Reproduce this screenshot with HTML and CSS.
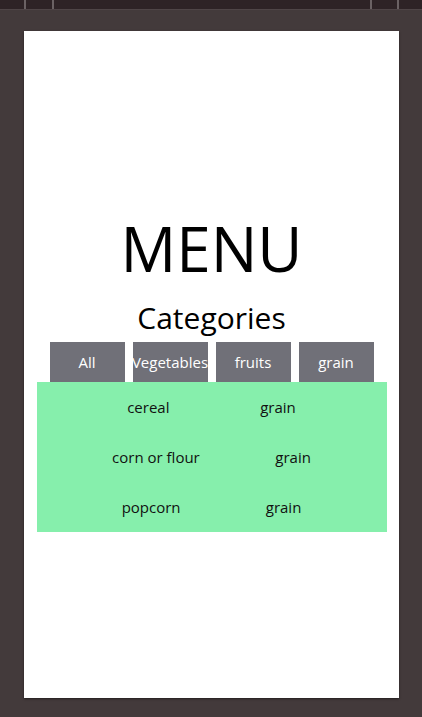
FILE: index.html
```html
<!DOCTYPE html>
<html lang="en">
<head>
<meta charset="utf-8">
<title>Menu</title>
<link rel="stylesheet" href="styles.css">
</head>
<body>
<div class="topbar">
  <span class="tick t1"></span>
  <span class="tick t2"></span>
  <span class="spacer"></span>
  <span class="tick t3"></span>
  <span class="tick t4"></span>
</div>
<div class="stage">
  <main class="device">
    <h1 class="title">MENU</h1>
    <h2 class="subtitle">Categories</h2>
    <div class="filters">
      <div class="btn">All</div>
      <div class="btn">Vegetables</div>
      <div class="btn">fruits</div>
      <div class="btn">grain</div>
    </div>
    <div class="list">
      <div class="row"><span>cereal</span><span>grain</span></div>
      <div class="row"><span>corn or flour</span><span>grain</span></div>
      <div class="row"><span>popcorn</span><span>grain</span></div>
    </div>
  </main>
</div>
</body>
</html>
```
FILE: styles.css
```css
html, body {
  margin: 0;
  padding: 0;
}
body {
  background: #433a3b;
  font-family: "Open Sans", "Noto Sans", sans-serif;
  width: 422px;
  height: 717px;
  overflow: hidden;
}
.topbar {
  height: 9px;
  background: #2e2326;
  border-bottom: 1px solid #4f4547;
  display: flex;
  align-items: stretch;
}
.tick {
  width: 2px;
  background: #6b6264;
}
.t1 { margin-left: 24px; }
.t2 { margin-left: 26px; }
.spacer { flex: 1; }
.t3 { margin-right: 25px; }
.t4 { margin-right: 23px; }
.stage {
  padding: 21px 23px 0 24px;
}
.device {
  width: 375px;
  height: 667px;
  background: #ffffff;
  box-shadow: 0 1px 2px rgba(0,0,0,0.5);
  display: flex;
  flex-direction: column;
  align-items: center;
  padding-top: 177px;
  box-sizing: border-box;
}
.title {
  margin: 0;
  font-weight: 400;
  font-size: 62px;
  line-height: 80px;
  color: #000;
}
.subtitle {
  margin: 8px 0 0;
  font-weight: 400;
  font-size: 30px;
  line-height: 44px;
  color: #000;
}
.filters {
  display: flex;
  gap: 8px;
  margin-top: 2px;
}
.btn {
  width: 75px;
  height: 40px;
  background: #707078;
  color: #fff;
  font-size: 15px;
  display: flex;
  align-items: center;
  justify-content: center;
  white-space: nowrap;
}
.list {
  width: 350px;
  background: #86efac;
}
.row {
  height: 50px;
  display: flex;
  align-items: center;
  justify-content: space-evenly;
  font-size: 15px;
  color: #111;
}
```
